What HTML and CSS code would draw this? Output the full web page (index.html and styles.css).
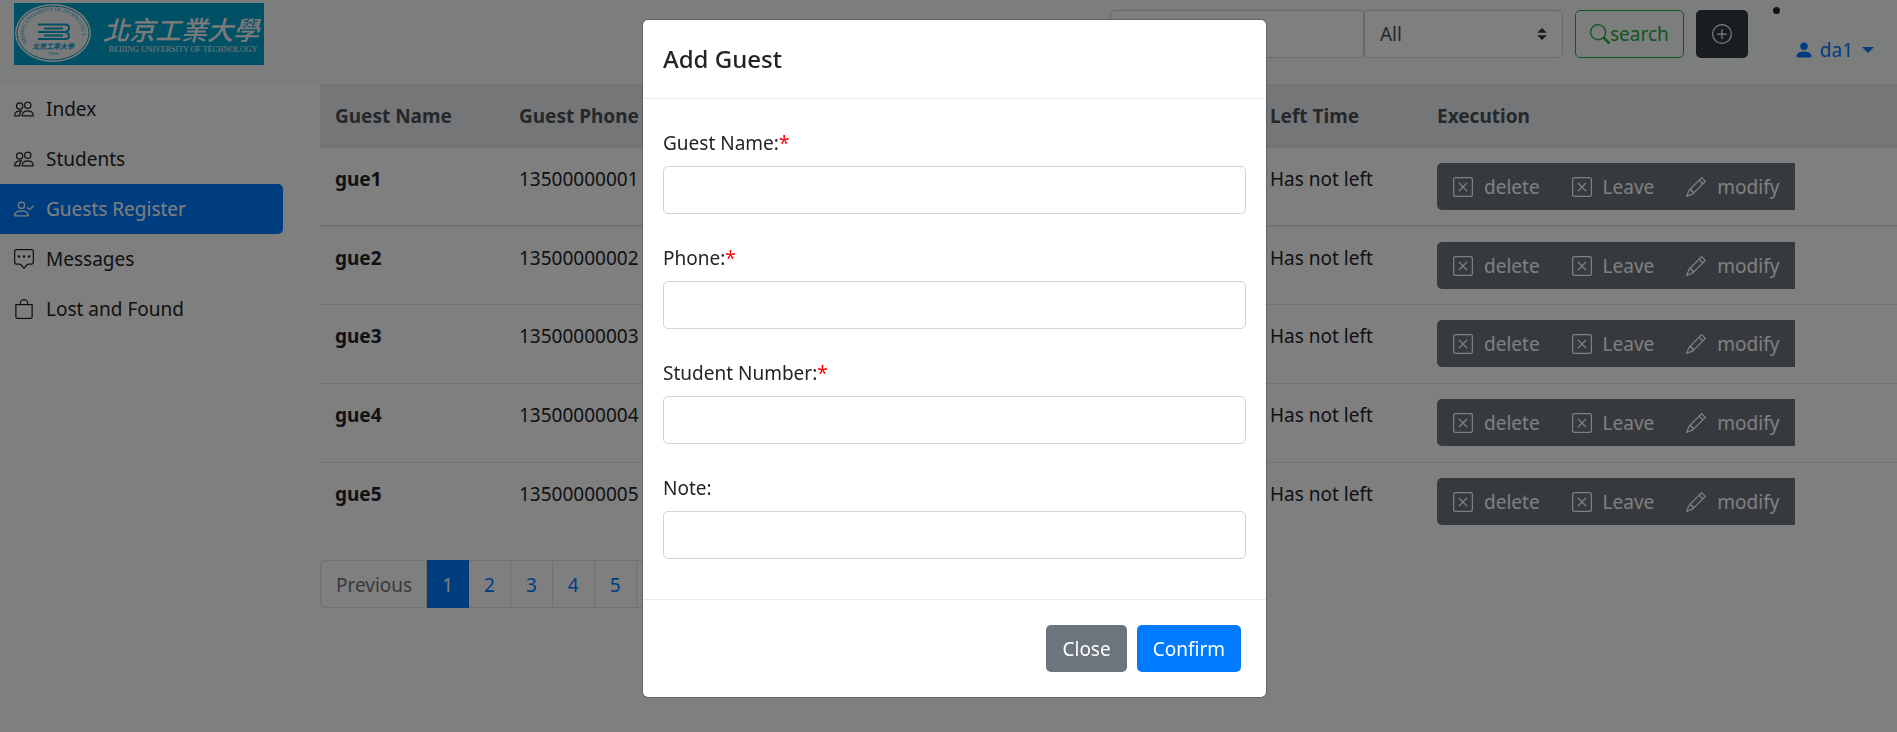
FILE: index.html
```html
<!DOCTYPE html>
<html lang="en">
<head>
<meta charset="utf-8">
<title>Guests Register</title>
<link rel="stylesheet" href="styles.css">
</head>
<body>
<svg class="sprite" aria-hidden="true">
  <symbol id="people" viewBox="0 0 16 16"><path d="M15 14s1 0 1-1-1-4-5-4-5 3-5 4 1 1 1 1h8zm-7.978-1A.261.261 0 0 1 7 12.996c.001-.264.167-1.03.76-1.72C8.312 10.629 9.282 10 11 10c1.717 0 2.687.63 3.24 1.276.593.69.758 1.457.76 1.72l-.008.002a.274.274 0 0 1-.014.002H7.022zM11 7a2 2 0 1 0 0-4 2 2 0 0 0 0 4zm3-2a3 3 0 1 1-6 0 3 3 0 0 1 6 0zM6.936 9.28a5.880 5.880 0 0 0-1.230-.247A7.350 7.350 0 0 0 5 9c-4 0-5 3-5 4 0 .667.333 1 1 1h4.216A2.238 2.238 0 0 1 5 13c0-1.010.377-2.042 1.090-2.904.243-.294.526-.569.846-.816zM4.920 10A5.493 5.493 0 0 0 4 13H1c0-.260.164-1.030.760-1.724.545-.636 1.492-1.256 3.160-1.275zM1.500 5.500a3 3 0 1 1 6 0 3 3 0 0 1-6 0zm3-2a2 2 0 1 0 0 4 2 2 0 0 0 0-4z"/></symbol>
  <symbol id="person-check" viewBox="0 0 16 16"><path d="M6 8a3 3 0 1 0 0-6 3 3 0 0 0 0 6zm2-3a2 2 0 1 1-4 0 2 2 0 0 1 4 0zm4 8c0 1-1 1-1 1H1s-1 0-1-1 1-4 6-4 6 3 6 4zm-1-.004c-.001-.246-.154-.986-.832-1.664C9.516 10.680 8.289 10 6 10c-2.290 0-3.516.680-4.168 1.332-.678.678-.830 1.418-.832 1.664h10z"/><path d="M15.854 5.146a.5.5 0 0 1 0 .708l-3 3a.5.5 0 0 1-.708 0l-1.500-1.500a.5.5 0 0 1 .708-.708L12.500 7.793l2.646-2.647a.5.5 0 0 1 .708 0z"/></symbol>
  <symbol id="chat" viewBox="0 0 16 16"><path d="M14 .5H2A1.500 1.500 0 0 0 .5 2v8.500A1.500 1.500 0 0 0 2 12h2.500a1 1 0 0 1 .8.400L8 15.300l2.700-2.900a1 1 0 0 1 .8-.4H14a1.500 1.500 0 0 0 1.500-1.500V2A1.500 1.500 0 0 0 14 .5z" fill="none" stroke="currentColor"/><circle cx="4" cy="6" r="1"/><circle cx="8" cy="6" r="1"/><circle cx="12" cy="6" r="1"/></symbol>
  <symbol id="bag" viewBox="0 0 16 16"><path d="M8 1a2.500 2.500 0 0 1 2.500 2.500V4h-5v-.5A2.500 2.500 0 0 1 8 1zm3.500 3v-.5a3.500 3.500 0 1 0-7 0V4H1v10a2 2 0 0 0 2 2h10a2 2 0 0 0 2-2V4h-3.500zM2 5h12v9a1 1 0 0 1-1 1H3a1 1 0 0 1-1-1V5z"/></symbol>
  <symbol id="x-square" viewBox="0 0 16 16"><path d="M14 1a1 1 0 0 1 1 1v12a1 1 0 0 1-1 1H2a1 1 0 0 1-1-1V2a1 1 0 0 1 1-1h12zM2 0a2 2 0 0 0-2 2v12a2 2 0 0 0 2 2h12a2 2 0 0 0 2-2V2a2 2 0 0 0-2-2H2z"/><path d="M4.646 4.646a.5.5 0 0 1 .708 0L8 7.293l2.646-2.647a.5.5 0 0 1 .708.708L8.707 8l2.647 2.646a.5.5 0 0 1-.708.708L8 8.707l-2.646 2.647a.5.5 0 0 1-.708-.708L7.293 8 4.646 5.354a.5.5 0 0 1 0-.708z"/></symbol>
  <symbol id="pencil" viewBox="0 0 16 16"><path d="M12.146.146a.5.5 0 0 1 .708 0l3 3a.5.5 0 0 1 0 .708l-10 10a.5.5 0 0 1-.168.110l-5 2a.5.5 0 0 1-.650-.650l2-5a.5.5 0 0 1 .110-.168l10-10zM11.207 2.500 13.500 4.793 14.793 3.500 12.500 1.207 11.207 2.500zm1.586 3L10.500 3.207 4 9.707V10h.5a.5.5 0 0 1 .5.5v.5h.5a.5.5 0 0 1 .5.5v.5h.293l6.500-6.500zm-9.761 5.175-.106.106-1.528 3.821 3.821-1.528.106-.106A.5.5 0 0 1 5 12.500V12h-.5a.5.5 0 0 1-.5-.5V11h-.5a.5.5 0 0 1-.468-.325z"/></symbol>
  <symbol id="search" viewBox="0 0 16 16"><path d="M11.742 10.344a6.500 6.500 0 1 0-1.397 1.398h-.001c.030.040.062.078.098.115l3.850 3.850a1 1 0 0 0 1.415-1.414l-3.850-3.850a1.007 1.007 0 0 0-.115-.100zM12 6.500a5.500 5.500 0 1 1-11 0 5.500 5.500 0 0 1 11 0z"/></symbol>
  <symbol id="plus-circle" viewBox="0 0 16 16"><path d="M8 15A7 7 0 1 1 8 1a7 7 0 0 1 0 14zm0 1A8 8 0 1 0 8 0a8 8 0 0 0 0 16z"/><path d="M8 4a.5.5 0 0 1 .5.5v3h3a.5.5 0 0 1 0 1h-3v3a.5.5 0 0 1-1 0v-3h-3a.5.5 0 0 1 0-1h3v-3A.5.5 0 0 1 8 4z"/></symbol>
  <symbol id="person-fill" viewBox="0 0 16 16"><path d="M2 15.500s-1.500 0-1.500-1.500S2 9.500 8 9.500s7.500 3 7.500 4.500-1.500 1.500-1.500 1.500H2zM8 8a3.800 3.800 0 1 0 0-7.600A3.800 3.800 0 0 0 8 8z"/></symbol>
</svg>

<header class="navbar">
  <a class="brand" href="#" aria-label="Beijing University of Technology">
    <svg class="brand-logo" viewBox="0 0 250 62">
      <rect width="250" height="62" fill="#00a0cc"/>
      <ellipse cx="39" cy="30" rx="38" ry="29" fill="#f4f4f4"/>
      <ellipse cx="39" cy="30" rx="36" ry="27" fill="none" stroke="#00a0cc" stroke-width="1"/>
      <path id="ring" d="M14 41A29 22 0 1 1 64 41" fill="none"/>
      <text class="logo-ring"><textPath href="#ring" startOffset="2">BEIJING UNIVERSITY OF TECHNOLOGY</textPath></text>
      <path d="M24 21.500h27q4 0 4 3.500t-4 4q4 1 4 4t-4 3H24M30 25.500h19M24 29h27M30 32.500h19" fill="none" stroke="#00a0cc" stroke-width="2"/>
      <text class="logo-mini" x="39" y="46">北京工業大學</text>
      <text class="logo-year" x="39" y="52">1960</text>
      <text class="logo-name" x="167" y="37">北京工業大學</text>
      <text class="logo-sub" x="169" y="49">BEIJING UNIVERSITY OF TECHNOLOGY</text>
    </svg>
  </a>
  <form class="search-form">
    <div class="search-group">
      <input class="field search-input" type="text" aria-label="Search">
      <select class="field search-select" aria-label="Filter"><option>All</option></select>
    </div>
    <button class="btn btn-search" type="button"><svg class="icon"><use href="#search"/></svg>search</button>
    <button class="btn btn-dark" type="button" aria-label="Add guest"><svg class="icon"><use href="#plus-circle"/></svg></button>
  </form>
  <div class="account">
    <span class="dot"></span>
    <a class="account-link" href="#"><svg class="icon-sm"><use href="#person-fill"/></svg>da1<span class="caret"></span></a>
  </div>
</header>

<div class="layout">
  <nav class="sidebar">
    <a class="side-link" href="#"><svg class="icon"><use href="#people"/></svg>Index</a>
    <a class="side-link" href="#"><svg class="icon"><use href="#people"/></svg>Students</a>
    <a class="side-link active" href="#"><svg class="icon"><use href="#person-check"/></svg>Guests Register</a>
    <a class="side-link" href="#"><svg class="icon"><use href="#chat"/></svg>Messages</a>
    <a class="side-link" href="#"><svg class="icon"><use href="#bag"/></svg>Lost and Found</a>
  </nav>

  <main class="content">
    <table class="guests">
      <colgroup><col class="col-name"><col class="col-phone"><col class="col-visit"><col class="col-left"><col></colgroup>
      <thead>
        <tr><th>Guest Name</th><th>Guest Phone</th><th></th><th>Left Time</th><th>Execution</th></tr>
      </thead>
      <tbody>
        <tr><th>gue1</th><td>13500000001</td><td></td><td>Has not left</td><td class="cell-actions"><div class="actions"><button type="button"><svg class="icon"><use href="#x-square"/></svg>delete</button><button type="button"><svg class="icon"><use href="#x-square"/></svg>Leave</button><button type="button"><svg class="icon"><use href="#pencil"/></svg>modify</button></div></td></tr>
        <tr><th>gue2</th><td>13500000002</td><td></td><td>Has not left</td><td class="cell-actions"><div class="actions"><button type="button"><svg class="icon"><use href="#x-square"/></svg>delete</button><button type="button"><svg class="icon"><use href="#x-square"/></svg>Leave</button><button type="button"><svg class="icon"><use href="#pencil"/></svg>modify</button></div></td></tr>
        <tr><th>gue3</th><td>13500000003</td><td></td><td>Has not left</td><td class="cell-actions"><div class="actions"><button type="button"><svg class="icon"><use href="#x-square"/></svg>delete</button><button type="button"><svg class="icon"><use href="#x-square"/></svg>Leave</button><button type="button"><svg class="icon"><use href="#pencil"/></svg>modify</button></div></td></tr>
        <tr><th>gue4</th><td>13500000004</td><td></td><td>Has not left</td><td class="cell-actions"><div class="actions"><button type="button"><svg class="icon"><use href="#x-square"/></svg>delete</button><button type="button"><svg class="icon"><use href="#x-square"/></svg>Leave</button><button type="button"><svg class="icon"><use href="#pencil"/></svg>modify</button></div></td></tr>
        <tr><th>gue5</th><td>13500000005</td><td></td><td>Has not left</td><td class="cell-actions"><div class="actions"><button type="button"><svg class="icon"><use href="#x-square"/></svg>delete</button><button type="button"><svg class="icon"><use href="#x-square"/></svg>Leave</button><button type="button"><svg class="icon"><use href="#pencil"/></svg>modify</button></div></td></tr>
      </tbody>
    </table>
    <nav class="pagination" aria-label="Pages">
      <a class="disabled" href="#">Previous</a><a class="current" href="#">1</a><a href="#">2</a><a href="#">3</a><a href="#">4</a><a href="#">5</a><a href="#">Next</a>
    </nav>
  </main>
</div>

<div class="backdrop">
  <form class="modal" role="dialog" aria-labelledby="modal-title">
    <div class="modal-header"><h5 class="modal-title" id="modal-title">Add Guest</h5></div>
    <div class="modal-body">
      <div class="form-group"><label for="g-name">Guest Name:<span class="required">*</span></label><input class="field" id="g-name" type="text"></div>
      <div class="form-group"><label for="g-phone">Phone:<span class="required">*</span></label><input class="field" id="g-phone" type="text"></div>
      <div class="form-group"><label for="g-student">Student Number:<span class="required">*</span></label><input class="field" id="g-student" type="text"></div>
      <div class="form-group"><label for="g-note">Note:</label><input class="field" id="g-note" type="text"></div>
    </div>
    <div class="modal-footer">
      <button class="btn btn-secondary" type="button">Close</button>
      <button class="btn btn-primary" type="button">Confirm</button>
    </div>
  </form>
</div>
</body>
</html>
```
FILE: styles.css
```css
* { box-sizing: border-box; }

body {
  margin: 0;
  background: #fff;
  color: #212529;
  font-family: "Noto Sans", "Noto Sans CJK SC", sans-serif;
  font-size: 19px;
  line-height: 30px;
}

button, input, select { font: inherit; margin: 0; }
a { color: #007bff; text-decoration: none; }

.sprite { display: none; }
.icon { width: 20px; height: 20px; flex: none; fill: currentColor; }
.icon-sm { width: 16px; height: 16px; flex: none; fill: currentColor; }

/* Top bar */
.navbar {
  display: flex;
  align-items: flex-start;
  height: 84px;
  padding: 0 23px 0 14px;
  background: #f8fcfa;
}
.brand { margin-top: 3px; }
.brand-logo { display: block; width: 250px; height: 62px; }
.brand-logo text { fill: #f4f4f4; text-anchor: middle; }
.brand-logo .logo-name { font: italic 500 26px "Noto Sans CJK TC", sans-serif; }
.brand-logo .logo-sub { font: 8px "Liberation Serif", serif; }
.brand-logo .logo-ring { font: 5px "Liberation Serif", serif; fill: #00a0cc; text-anchor: start; }
.brand-logo .logo-mini { font: italic bold 7px "Noto Sans CJK TC", sans-serif; fill: #00a0cc; }
.brand-logo .logo-year { font: 5px "Liberation Serif", serif; fill: #00a0cc; }

.search-form { display: flex; gap: 12px; margin: 10px 0 0 auto; }
.search-group { display: flex; }
.field {
  height: 48px;
  padding: 0 15px;
  border: 1px solid #ced4da;
  border-radius: 5px;
  background-color: #fff;
  color: #495057;
}
.search-input { width: 254px; border-radius: 5px 0 0 5px; }
.search-select {
  width: 199px;
  appearance: none;
  background-image: url("data:image/svg+xml,%3Csvg xmlns='http://www.w3.org/2000/svg' viewBox='0 0 4 5'%3E%3Cpath fill='%23343a40' d='M2 0L0 2h4zm0 5L0 3h4z'/%3E%3C/svg%3E");
  background-repeat: no-repeat;
  background-position: right 15px center;
  background-size: 10px 12px;
}

.btn {
  display: inline-flex;
  align-items: center;
  height: 47px;
  padding: 0 15px;
  border: 1px solid transparent;
  border-radius: 5px;
  color: #fff;
}
.search-form .btn { height: 48px; }
.search-form .btn-search { padding: 0 14px; border-color: #28a745; background: transparent; color: #28a745; }
.btn-dark { background: #343a40; }
.btn-secondary { background: #6c757d; }
.btn-primary { background: #007bff; }

.account { display: flex; align-items: flex-start; gap: 16px; margin-left: 25px; }
.dot { width: 7px; height: 7px; margin-top: 7px; border-radius: 50%; background: #212529; }
.account-link { display: flex; align-items: center; gap: 8px; margin-top: 35px; }
.caret {
  margin-left: 1px;
  border: 6px solid transparent;
  border-top-color: currentColor;
  border-bottom: 0;
}

/* Page body */
.layout { display: flex; align-items: flex-start; }
.sidebar { flex: none; width: 283px; margin-right: 37px; }
.side-link {
  display: flex;
  align-items: center;
  gap: 12px;
  padding: 10px 14px;
  color: #212529;
}
.side-link.active { border-radius: 0 5px 5px 0; background: #007bff; color: #fff; }

.content { flex: 1; }
.guests { width: 100%; table-layout: fixed; border-collapse: separate; border-spacing: 0; }
.col-name { width: 184px; }
.col-phone { width: 170px; }
.col-visit { width: 581px; }
.col-left { width: 167px; }
.guests th, .guests td {
  height: 79px;
  padding: 16px 15px 14px;
  border-top: 1px solid #dee2e6;
  text-align: left;
  vertical-align: top;
}
.guests .cell-actions { padding: 15px; }
.guests thead th {
  height: 64px;
  border-bottom: 3px solid #dee2e6;
  background: #e9ecef;
  color: #495057;
}
.guests tbody tr:first-child > * { height: 77px; border-top: 0; }
.guests tbody tr:nth-child(2) > * { border-top-width: 2px; }

.actions { display: inline-flex; vertical-align: top; border-radius: 5px 0 0 5px; background: #6c757d; }
.actions button {
  display: flex;
  align-items: center;
  gap: 11px;
  height: 47px;
  padding: 0 16px;
  border: 0;
  background: none;
  color: #fff;
}

.pagination { display: flex; margin-top: 19px; }
.pagination a {
  height: 48px;
  padding: 9px 15px 7px;
  border: 1px solid #dee2e6;
  border-left-width: 0;
}
.pagination a:first-child { padding-right: 14px; border-left-width: 1px; border-radius: 5px 0 0 5px; }
.pagination .disabled { color: #6c757d; }
.pagination .current { border-color: #007bff; background: #007bff; color: #fff; }

/* Dialog */
.backdrop {
  position: fixed;
  inset: 0;
  display: flex;
  align-items: flex-start;
  justify-content: center;
  padding: 19px 0 0 12px;
  background: rgba(0, 0, 0, .5);
}
.modal {
  width: 625px;
  border: 1px solid rgba(0, 0, 0, .2);
  border-radius: 6px;
  background: #fff;
  background-clip: padding-box;
}
.modal-header { padding: 20px; border-bottom: 1px solid #e9ecef; }
.modal-title { margin: 0; font-size: 24px; font-weight: 500; line-height: 38px; }
.modal-body { display: grid; gap: 29px; padding: 29px 20px 40px; }
.form-group { display: grid; gap: 8px; }
.form-group .field { width: 100%; }
.required { color: #f00; }
.modal-footer {
  display: flex;
  justify-content: flex-end;
  gap: 10px;
  padding: 25px;
  border-top: 1px solid #e9ecef;
}
```
